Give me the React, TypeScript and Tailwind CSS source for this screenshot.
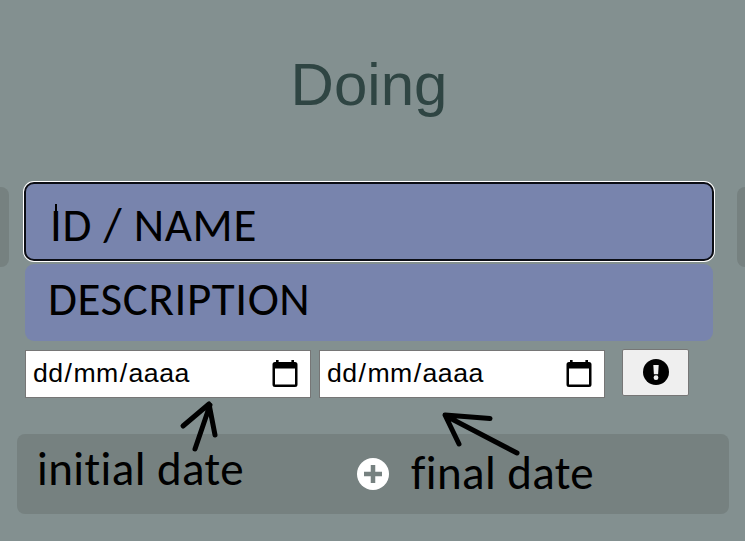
import type { ReactNode } from "react";

function Calendar() {
  return (
    <svg className="h-7 w-[26px] shrink-0" viewBox="0 0 26 28">
      <path d="M3 2h20A2.500 2.500 0 0 1 25.500 4.500v20a2.500 2.500 0 0 1-2.500 2.500H3A2.500 2.500 0 0 1 .5 24.500V4.500A2.500 2.500 0 0 1 3 2ZM3 8.500v16h20v-16Z" fill="#000" fillRule="evenodd" />
      <path d="M4 0h2.600v4H4ZM19.400 0H22v4h-2.600Z" fill="#000" />
    </svg>
  );
}

function DateField() {
  return (
    <div className="flex h-12 w-[286px] items-center justify-between border border-[#767676] bg-white pl-1.5 pr-3">
      <div className="-mt-0.5 flex text-[26.67px] leading-[30px] tracking-[0.45px] text-black">
        <span className="px-px">dd</span>
        <span>/</span>
        <span className="px-px">mm</span>
        <span>/</span>
        <span className="px-px">aaaa</span>
      </div>
      <Calendar />
    </div>
  );
}

function Note({ className, children }: { className: string; children: ReactNode }) {
  return (
    <span className={`absolute whitespace-nowrap font-[Carlito,Lato,sans-serif] text-[47px] leading-[50px] text-black [font-variant-ligatures:none] ${className}`}>
      {children}
    </span>
  );
}

export default function App() {
  return (
    <main className="relative flex h-[541px] w-[745px] flex-col overflow-hidden bg-[#839090] font-['Liberation_Sans',Arial,sans-serif]">
      <h1 className="mt-[50px] pr-[7px] text-center text-[60px] leading-[69px] text-[#2f4543]">Doing</h1>

      <section className="mt-[63px] flex h-[159px]">
        <div className="mt-[5px] h-20 w-[9px] rounded-r-lg bg-[#768180]" />
        <div className="ml-[15px] flex w-[690px] flex-col gap-[3px]">
          <div className="h-[79px] rounded-[10px] border-2 border-[#0b0d14] bg-[#7884ad] shadow-[0_0_0_1px_#fff]" />
          <div className="mx-px h-[77px] rounded-[9px] bg-[#7884ad]" />
        </div>
        <div className="ml-auto mt-[5px] h-20 w-2 rounded-l-lg bg-[#768180]" />
      </section>

      <div className="mt-[9px] flex h-12 pl-[25px]">
        <DateField />
        <div className="ml-2 flex">
          <DateField />
        </div>
        <button className="-mt-px ml-[17px] flex h-[47px] w-[67px] items-center justify-center rounded-[2px] border border-[#767676] bg-[#efefef]">
          <svg className="-mt-px h-[26px] w-[26px]" viewBox="0 0 26 26">
            <circle cx="13" cy="13" r="13" fill="#000" />
            <path d="M10.300 6h5.400l-.6 9.200h-4.200Z" fill="#efefef" />
            <circle cx="13" cy="18.700" r="2.400" fill="#efefef" />
          </svg>
        </button>
      </div>

      <div className="ml-[17px] mt-9 flex h-20 w-[712px] items-center justify-center rounded-lg bg-[#768180]">
        <svg className="h-8 w-8" viewBox="0 0 32 32">
          <circle cx="16" cy="16" r="16" fill="#fff" />
          <path d="M7 16h18M16 7v18" stroke="#768180" strokeWidth="4.500" />
        </svg>
      </div>

      <Note className="left-[50px] top-[200px] tracking-[0.7px]">ID / NAME</Note>
      <Note className="left-[48px] top-[274px] tracking-[0.6px]">DESCRIPTION</Note>
      <Note className="left-[37px] top-[444px] tracking-[0.4px]">initial date</Note>
      <Note className="left-[411px] top-[448px] tracking-[0.4px]">final date</Note>
      <svg className="absolute inset-0 h-full w-full" viewBox="0 0 745 541" fill="none" stroke="#000" strokeWidth="5" strokeLinecap="round" strokeLinejoin="round">
        <path d="M56 204v16" strokeWidth="2" strokeLinecap="butt" />
        <path d="M183 426l26-22 6 31M210 405l-15 44" />
        <path d="M490 418.500L445 415l14 29M446 416l71 37" />
      </svg>
    </main>
  );
}
